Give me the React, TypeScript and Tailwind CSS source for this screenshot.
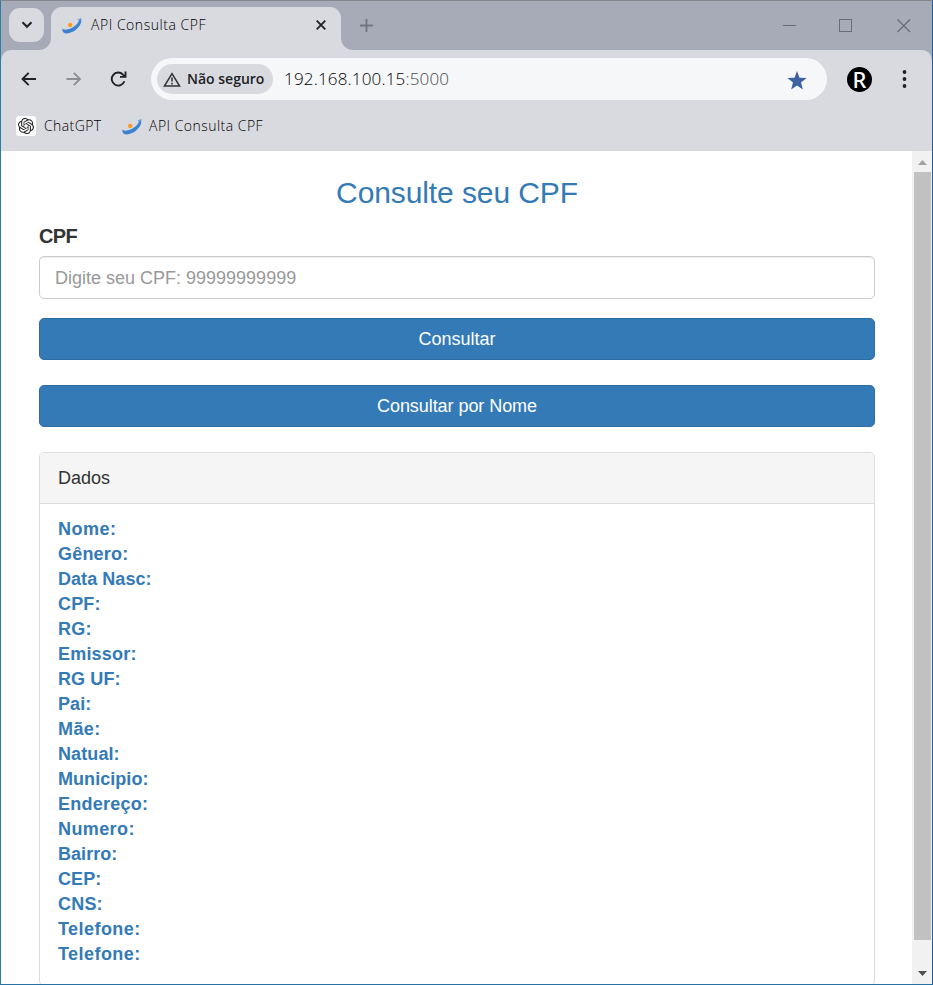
import React from "react";
import { SiOpenai } from "react-icons/si";

const fields = [
  { label: "Nome:", track: "tracking-[0.5px]" },
  { label: "Gênero:", track: "tracking-[0.2px]" },
  { label: "Data Nasc:", track: "tracking-[0.05px]" },
  { label: "CPF:", track: "tracking-[0.15px]" },
  { label: "RG:", track: "tracking-[0.3px]" },
  { label: "Emissor:", track: "tracking-[0.2px]" },
  { label: "RG UF:", track: "tracking-[0.1px]" },
  { label: "Pai:", track: "tracking-[0.1px]" },
  { label: "Mãe:", track: "tracking-[0.4px]" },
  { label: "Natual:", track: "tracking-[0.1px]" },
  { label: "Municipio:", track: "tracking-[0.05px]" },
  { label: "Endereço:", track: "tracking-[0.25px]" },
  { label: "Numero:", track: "tracking-[0.4px]" },
  { label: "Bairro:", track: "tracking-[0.05px]" },
  { label: "CEP:", track: "tracking-[0.1px]" },
  { label: "CNS:", track: "tracking-[0.2px]" },
  { label: "Telefone:", track: "tracking-[0.45px]" },
  { label: "Telefone:", track: "tracking-[0.45px]" },
];

function SiteIcon() {
  return (
    <svg width="20" height="18" viewBox="0 0 20 18" className="shrink-0">
      <path d="M0.4 11.2 C-0.2 16.8 4.4 17.8 10 15.1 C15.6 12.4 20.2 7 19.2 1.3 L16.8 2.3 C17.2 5.6 13.6 9.2 9 11.3 C5 13 1.6 13.2 0.4 11.2Z" fill="#3b82d0" />
      <path d="M14.8 2.4 L19.2 1.3 L18.4 3.4Z" fill="#6fa6de" />
      <circle cx="8.2" cy="7.9" r="2.2" fill="#fb9a1c" />
    </svg>
  );
}

function TabStrip() {
  return (
    <div className="flex h-[49px] bg-[#a7abb8] pl-2 pr-[21px]">
      <div className="mt-[7px] flex h-[34px] w-[35px] items-center justify-center rounded-[11px] bg-[#d9dae0]">
        <svg width="12" height="8" viewBox="0 0 12 8" fill="none" stroke="#202124" strokeWidth="2">
          <path d="M1.5 1.3 L6 5.8 L10.5 1.3" />
        </svg>
      </div>
      <div className="relative ml-[7px] mt-[6px] flex h-[43px] w-[290px] rounded-t-[11px] bg-[#d9dae0] pl-[11px]">
        <svg className="absolute -left-[12px] bottom-0" width="12" height="12"><path d="M12 0 V12 H0 A12 12 0 0 0 12 0Z" fill="#d9dae0" /></svg>
        <svg className="absolute -right-[12px] bottom-0" width="12" height="12"><path d="M0 0 V12 H12 A12 12 0 0 1 0 0Z" fill="#d9dae0" /></svg>
        <div className="mt-[10px]"><SiteIcon /></div>
        <span className="ml-[9px] mt-[8px] w-[225px] shrink-0 font-['Open_Sans',sans-serif] text-[14px] font-light leading-[20px] tracking-[0.53px] text-black">API Consulta CPF</span>
        <svg className="mt-[13px] shrink-0" width="10" height="10" viewBox="0 0 10 10" stroke="#202124" strokeWidth="1.8"><path d="M0.7 0.7 L9.3 9.3 M9.3 0.7 L0.7 9.3" /></svg>
      </div>
      <svg className="ml-[19px] mt-[18px]" width="13" height="13" viewBox="0 0 13 13" stroke="#73767f" strokeWidth="1.8"><path d="M6.5 0 V13 M0 6.5 H13" /></svg>
      <div className="ml-auto mt-[18px] flex items-start gap-[43px]">
        <svg width="13" height="13" viewBox="0 0 13 13" stroke="#6a6d76"><path d="M0 6.5 H13" /></svg>
        <svg width="13" height="13" viewBox="0 0 13 13" fill="none" stroke="#6a6d76"><rect x="0.5" y="0.5" width="12" height="12" /></svg>
        <svg className="ml-[2px]" width="14" height="14" viewBox="0 0 14 14" stroke="#6a6d76" strokeWidth="1.3"><path d="M0.5 0.5 L13 13 M13 0.5 L0.5 13" /></svg>
      </div>
    </div>
  );
}

function Toolbar() {
  return (
    <div className="bg-[#a7abb8]">
      <div className="h-[101px] rounded-t-[10px] bg-[#d9dae0]">
        <div className="flex h-[58px] items-center pl-[20px]">
          <svg width="16" height="14" viewBox="0 0 16 14" fill="none" stroke="#202124" strokeWidth="1.9"><path d="M15 7 H1.5 M7.7 0.8 L1.5 7 L7.7 13.2" /></svg>
          <svg className="ml-[29px]" width="16" height="14" viewBox="0 0 16 14" fill="none" stroke="#8d8f95" strokeWidth="1.9"><path d="M0.5 7 H14 M7.8 0.8 L14 7 L7.8 13.2" /></svg>
          <svg className="ml-[28px]" width="17" height="16" viewBox="0 0 17 16" fill="none" stroke="#202124" strokeWidth="1.9"><path d="M14.4 10.2 A6.5 6.5 0 1 1 13 3.6 L14.8 5.3" /><path d="M15.5 0.6 V5.9 H10" /></svg>
          <div className="ml-[24px] flex h-[42px] w-[676px] items-center rounded-full bg-[#f5f7f9] pl-[6px]">
            <div className="flex h-[30px] w-[116px] shrink-0 items-center rounded-full bg-[#d9dae0] pl-[6px]">
              <svg width="18" height="15" viewBox="0 0 18 15" fill="none" stroke="#303135" strokeWidth="1.5"><path d="M9 1.6 L16.6 14.1 H1.4Z" /><path d="M9 5.6 V9.6 M9 10.8 V12.4" /></svg>
              <span className="ml-[6px] whitespace-nowrap font-['Open_Sans',sans-serif] text-[14px] font-semibold leading-[20px] tracking-[0px] text-[#202124]">Não seguro</span>
            </div>
            <span className="ml-[11px] font-['Open_Sans',sans-serif] text-[17px] font-light leading-[22px] tracking-[0.18px] text-black">192.168.100.15<span className="text-[#45484e]">:5000</span></span>
            <svg className="ml-auto mr-[20px] mt-[2px]" width="20" height="19" viewBox="0 0 20 19" fill="#3d629f"><path d="M10 0 L12.5 6.7 L19.6 7 L14 11.5 L15.9 18.6 L10 14.6 L4.1 18.6 L6 11.5 L0.4 7 L7.5 6.7Z" /></svg>
          </div>
          <div className="ml-[20px] flex h-[25px] w-[25px] items-center justify-center rounded-full bg-black font-['Noto_Sans',sans-serif] text-[22px] font-medium leading-[25px] text-white">R</div>
          <svg className="ml-[30px]" width="5" height="18" viewBox="0 0 5 18" fill="#202124"><circle cx="2.5" cy="2" r="1.9" /><circle cx="2.5" cy="9" r="1.9" /><circle cx="2.5" cy="16" r="1.9" /></svg>
        </div>
        <div className="flex h-[36px] items-center pl-[15px] font-['Open_Sans',sans-serif] text-[14px] font-light leading-[20px] text-black">
          <div className="flex h-[20px] w-[20px] items-center justify-center rounded-[3px] bg-white"><SiOpenai size={16} color="#222" /></div>
          <span className="ml-[8px] w-[58px] whitespace-nowrap tracking-[0.4px]">ChatGPT</span>
          <div className="ml-[19.5px] mt-[2px]"><SiteIcon /></div>
          <span className="ml-[7.5px] tracking-[0.47px]">API Consulta CPF</span>
        </div>
      </div>
    </div>
  );
}

function Scrollbar() {
  return (
    <div className="flex w-[20px] flex-col items-center bg-[#f1f1f1] pl-px">
      <svg className="mt-[9px] shrink-0" width="9" height="5" viewBox="0 0 9 5" fill="#a3a3a3"><path d="M0 5 L4.5 0 L9 5Z" /></svg>
      <div className="mt-[7px] h-[768px] w-[17px] shrink-0 bg-[#c1c1c1]" />
      <svg className="mt-[31px] shrink-0" width="9" height="5" viewBox="0 0 9 5" fill="#505050"><path d="M0 0 L4.5 5 L9 0Z" /></svg>
    </div>
  );
}

export default function App() {
  return (
    <div className="flex h-[985px] w-[933px] flex-col overflow-hidden border border-b-[#2872a3] border-l-[#2a7fa8] border-r-[#1f5aa0] border-t-[#85868e] bg-white font-['Liberation_Sans',Arial,sans-serif] text-[18px] text-[#333]">
      <TabStrip />
      <Toolbar />
      <div className="flex min-h-0 flex-1">
        <main className="flex-1 overflow-hidden pl-[38px] pr-[37px]">
          <h3 className="mt-[25px] text-center text-[30px] leading-[33px] tracking-[-0.1px] text-[#337ab7]">Consulte seu CPF</h3>
          <label className="mt-[15px] block text-[20px] font-bold leading-[25px] tracking-[-0.6px]">CPF</label>
          <input
            className="mt-[7px] block h-[43px] w-full rounded-[5px] border border-[#ccc] px-[15px] pt-[1px] shadow-[inset_0_1px_1px_rgba(0,0,0,0.075)] placeholder:text-[#999] placeholder:opacity-100"
            placeholder="Digite seu CPF: 99999999999"
          />
          <button className="mt-[19px] block h-[42px] w-full rounded-[5px] border border-[#2e6da4] bg-[#337ab7] text-white">Consultar</button>
          <button className="mt-[25px] block h-[42px] w-full rounded-[5px] border border-[#2e6da4] bg-[#337ab7] tracking-[-0.06px] text-white">Consultar por Nome</button>
          <section className="mt-[25px] h-[534px] rounded-[5px] border border-[#ddd]">
            <div className="h-[51px] rounded-t-[4px] border-b border-[#ddd] bg-[#f5f5f5] px-[18px] leading-[50px]">Dados</div>
            <div className="px-[18px] pt-[13px] font-bold leading-[25px] text-[#337ab7]">
              {fields.map((f, i) => (
                <div key={i} className={f.track}>{f.label}</div>
              ))}
            </div>
          </section>
        </main>
        <Scrollbar />
      </div>
    </div>
  );
}
